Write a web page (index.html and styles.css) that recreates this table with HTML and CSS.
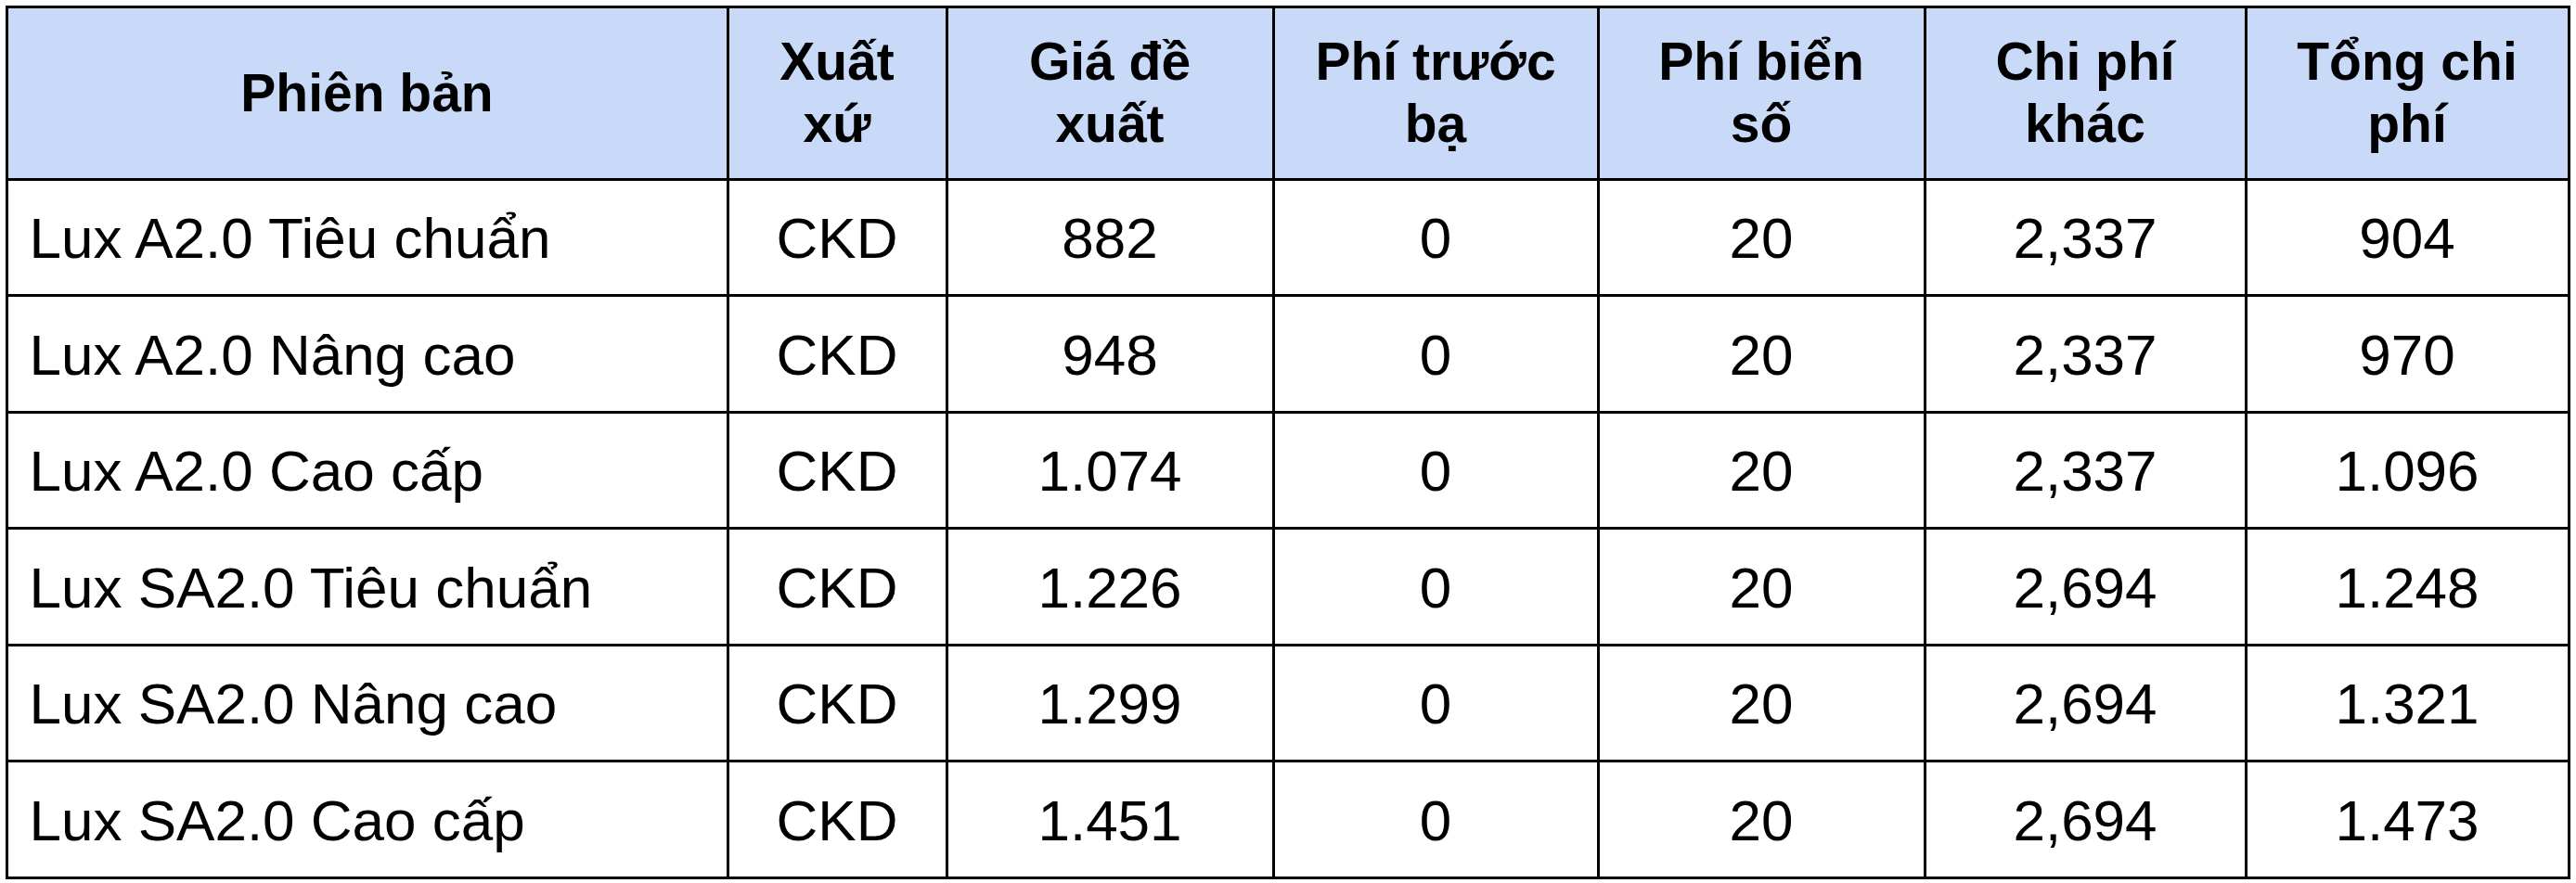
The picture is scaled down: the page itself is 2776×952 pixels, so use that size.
FILE: index.html
```html
<!DOCTYPE html>
<html lang="vi">
<head>
<meta charset="utf-8">
<title>Bảng giá</title>
<link rel="stylesheet" href="styles.css">
</head>
<body>
<table class="price-table">
  <colgroup>
    <col class="c1"><col class="c2"><col class="c3"><col class="c4"><col class="c5"><col class="c6"><col class="c7">
  </colgroup>
  <thead>
    <tr>
      <th>Phiên bản</th>
      <th>Xuất<br>xứ</th>
      <th>Giá đề<br>xuất</th>
      <th>Phí trước<br>bạ</th>
      <th>Phí biển<br>số</th>
      <th>Chi phí<br>khác</th>
      <th>Tổng chi<br>phí</th>
    </tr>
  </thead>
  <tbody>
    <tr><td class="name">Lux A2.0 Tiêu chuẩn</td><td>CKD</td><td>882</td><td>0</td><td>20</td><td>2,337</td><td>904</td></tr>
    <tr><td class="name">Lux A2.0 Nâng cao</td><td>CKD</td><td>948</td><td>0</td><td>20</td><td>2,337</td><td>970</td></tr>
    <tr><td class="name">Lux A2.0 Cao cấp</td><td>CKD</td><td>1.074</td><td>0</td><td>20</td><td>2,337</td><td>1.096</td></tr>
    <tr><td class="name">Lux SA2.0 Tiêu chuẩn</td><td>CKD</td><td>1.226</td><td>0</td><td>20</td><td>2,694</td><td>1.248</td></tr>
    <tr><td class="name">Lux SA2.0 Nâng cao</td><td>CKD</td><td>1.299</td><td>0</td><td>20</td><td>2,694</td><td>1.321</td></tr>
    <tr><td class="name">Lux SA2.0 Cao cấp</td><td>CKD</td><td>1.451</td><td>0</td><td>20</td><td>2,694</td><td>1.473</td></tr>
  </tbody>
</table>
</body>
</html>
```

FILE: styles.css
```css
html, body {
  margin: 0;
  padding: 0;
  background: #ffffff;
}
body {
  padding: 5.5px 0 0 5.5px;
  font-family: "Liberation Sans", Arial, sans-serif;
  color: #000000;
}
.price-table {
  border-collapse: collapse;
  table-layout: fixed;
  width: 2764px;
}
.c1 { width: 777px; }
.c2 { width: 236px; }
.c3 { width: 352px; }
.c4 { width: 350px; }
.c5 { width: 352px; }
.c6 { width: 346px; }
.c7 { width: 348px; }

.price-table th,
.price-table td {
  border: 3px solid #000000;
  text-align: center;
  vertical-align: middle;
  padding: 0;
}
.price-table th {
  background: #c9daf8;
  font-weight: bold;
  font-size: 57px;
  line-height: 67px;
  height: 183px;
}
.price-table td {
  font-size: 62px;
  line-height: 70px;
  height: 119.5px;
  padding-top: 3px;
}
.price-table td.name {
  text-align: left;
  padding-left: 23px;
}
```
